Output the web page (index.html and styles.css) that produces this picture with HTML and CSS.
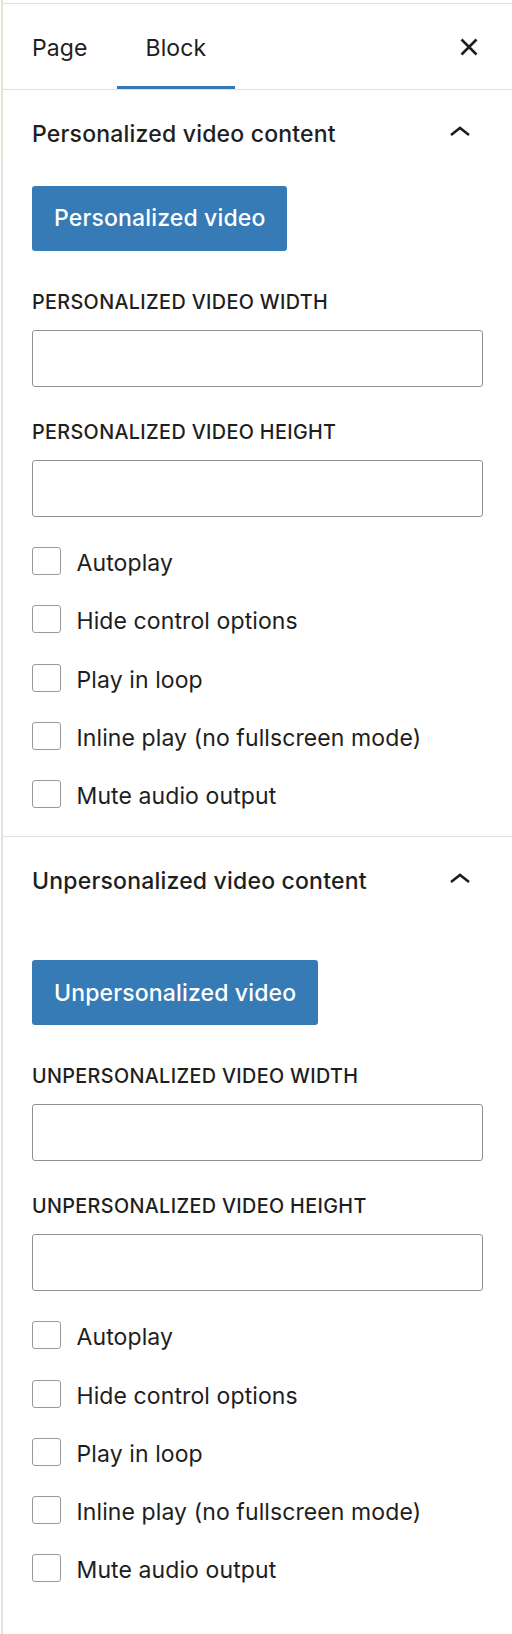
FILE: index.html
```html
<!DOCTYPE html>
<html lang="en">
<head>
<meta charset="utf-8">
<title>Block settings</title>
<link rel="stylesheet" href="styles.css">
</head>
<body>
<div class="app">
  <div class="edge"></div>
  <aside class="sidebar">
    <div class="tabs">
      <button class="tab">Page</button>
      <button class="tab tab--active">Block</button>
      <button class="close" aria-label="Close settings">
        <svg class="close-icon" viewBox="0 0 18 18" width="18" height="18" aria-hidden="true">
          <path d="M1.5 1.5 L16.5 16.5 M16.5 1.5 L1.5 16.5" fill="none" stroke="#1e1e1e" stroke-width="2.6"/>
        </svg>
      </button>
    </div>

    <section class="panel">
      <div class="panel-header">
        <h2 class="panel-title">Personalized video content</h2>
        <svg class="chevron" viewBox="0 0 20 10" width="20" height="10" aria-hidden="true">
          <path d="M1 9 L10 2 L19 9" fill="none" stroke="#1e1e1e" stroke-width="2.6"/>
        </svg>
      </div>
      <button class="btn-primary">Personalized video</button>
      <div class="field">
        <label class="field-label">Personalized video width</label>
        <input class="field-input" type="text">
      </div>
      <div class="field field--second">
        <label class="field-label">Personalized video height</label>
        <input class="field-input" type="text">
      </div>
      <ul class="checks">
        <li class="check"><span class="box"></span><span class="check-label">Autoplay</span></li>
        <li class="check"><span class="box"></span><span class="check-label">Hide control options</span></li>
        <li class="check"><span class="box"></span><span class="check-label">Play in loop</span></li>
        <li class="check"><span class="box"></span><span class="check-label">Inline play (no fullscreen mode)</span></li>
        <li class="check"><span class="box"></span><span class="check-label">Mute audio output</span></li>
      </ul>
    </section>

    <section class="panel panel--last">
      <div class="panel-header">
        <h2 class="panel-title">Unpersonalized video content</h2>
        <svg class="chevron" viewBox="0 0 20 10" width="20" height="10" aria-hidden="true">
          <path d="M1 9 L10 2 L19 9" fill="none" stroke="#1e1e1e" stroke-width="2.6"/>
        </svg>
      </div>
      <button class="btn-primary btn-primary--spaced">Unpersonalized video</button>
      <div class="field">
        <label class="field-label">Unpersonalized video width</label>
        <input class="field-input" type="text">
      </div>
      <div class="field field--second">
        <label class="field-label">Unpersonalized video height</label>
        <input class="field-input" type="text">
      </div>
      <ul class="checks">
        <li class="check"><span class="box"></span><span class="check-label">Autoplay</span></li>
        <li class="check"><span class="box"></span><span class="check-label">Hide control options</span></li>
        <li class="check"><span class="box"></span><span class="check-label">Play in loop</span></li>
        <li class="check"><span class="box"></span><span class="check-label">Inline play (no fullscreen mode)</span></li>
        <li class="check"><span class="box"></span><span class="check-label">Mute audio output</span></li>
      </ul>
    </section>
  </aside>
</div>
</body>
</html>
```

FILE: styles.css
```css
* { box-sizing: border-box; }

html, body {
  margin: 0;
  padding: 0;
  background: #ffffff;
}

body {
  font-family: Inter, "Liberation Sans", sans-serif;
  color: #1e1e1e;
  width: 512px;
  min-height: 1634px;
  overflow: hidden;
}

.app {
  display: flex;
  min-height: 1634px;
}

.edge {
  width: 3px;
  flex: 0 0 3px;
  border-left: 1px solid #ffffff;
  background: linear-gradient(#e9e3d8 0, #e9e3d8 163px, #dcdcdc 163px, #dcdcdc 164px, #e2e2e2 164px);
}

.sidebar {
  flex: 1;
  margin-top: 3px;
  border-top: 1px solid #e0e0e0;
}

/* Tabs */
.tabs {
  display: flex;
  align-items: center;
  height: 86px;
  border-bottom: 1px solid #e0e0e0;
}

.tab {
  height: 85px;
  align-self: flex-start;
  padding: 2px 29px 0;
  border: 0;
  background: transparent;
  font-family: inherit;
  font-size: 23px;
  font-weight: 400;
  color: #1e1e1e;
  line-height: 28px;
  letter-spacing: 0.1px;
}

.tab--active {
  box-shadow: inset 0 -3px 0 #3779b5;
}

.close {
  margin-left: auto;
  margin-right: 34px;
  padding: 0;
  border: 0;
  background: transparent;
  width: 18px;
  height: 18px;
  display: flex;
}

.close-icon { display: block; }

/* Panels */
.panel {
  padding: 0 29px 28px;
  border-bottom: 1px solid #e0e0e0;
}

.panel--last {
  border-bottom: 0;
}

.panel-header {
  display: flex;
  align-items: center;
  justify-content: space-between;
  padding-top: 29.6px;
  height: 57.6px;
}

.panel-title {
  margin: 0;
  font-size: 23px;
  font-weight: 500;
  line-height: 28px;
  letter-spacing: 0.2px;
}

.chevron {
  display: block;
  margin-right: 13px;
  margin-bottom: 6px;
}

.btn-primary {
  display: inline-flex;
  align-items: center;
  height: 65px;
  margin-top: 38.4px;
  padding: 0 22px;
  border: 0;
  border-radius: 3px;
  background: #367bb6;
  color: #ffffff;
  font-family: inherit;
  font-size: 23px;
  font-weight: 500;
  line-height: 28px;
  letter-spacing: 0.15px;
}

.btn-primary--spaced {
  margin-top: 65.4px;
}

.field {
  display: flex;
  flex-direction: column;
  margin-top: 39.3px;
}

.field--second {
  margin-top: 33px;
}

.field-label {
  font-size: 19.8px;
  font-weight: 500;
  line-height: 24px;
  letter-spacing: 0.35px;
  text-transform: uppercase;
  margin-bottom: 16px;
}

.field-input {
  width: 100%;
  height: 57px;
  border: 1px solid #929292;
  border-radius: 3px;
  background: #ffffff;
  font-family: inherit;
  font-size: 23px;
}

.checks {
  list-style: none;
  margin: 30px 0 0;
  padding: 0;
  display: flex;
  flex-direction: column;
  gap: 30.2px;
}

.check {
  display: flex;
  align-items: center;
  height: 28px;
}

.box {
  width: 28.5px;
  height: 28px;
  flex: 0 0 28.5px;
  border: 1px solid #9a9a9a;
  border-radius: 3px;
  background: #ffffff;
}

.check-label {
  margin-left: 16px;
  font-size: 23px;
  font-weight: 400;
  line-height: 28px;
  letter-spacing: 0.1px;
  padding-top: 4px;
}
```
